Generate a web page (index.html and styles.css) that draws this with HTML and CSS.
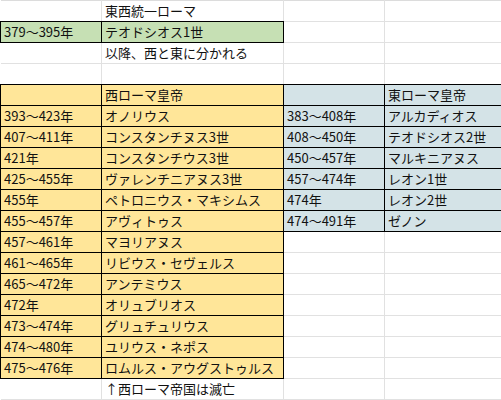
FILE: index.html
```html
<!DOCTYPE html>
<html lang="ja">
<head>
<meta charset="utf-8">
<link rel="stylesheet" href="styles.css">
</head>
<body class="page">
<table class="sheet">
  <colgroup>
    <col class="c-a"><col class="c-b"><col class="c-c"><col class="c-d">
  </colgroup>
  <tbody>
    <tr class="r"><td></td><td>東西統一ローマ</td><td></td><td></td></tr>
    <tr class="r"><td class="g">379～395年</td><td class="g">テオドシオス1世</td><td></td><td></td></tr>
    <tr class="r"><td></td><td>以降、西と東に分かれる</td><td></td><td></td></tr>
    <tr class="r"><td></td><td></td><td></td><td></td></tr>
    <tr class="r"><td class="y"></td><td class="y">西ローマ皇帝</td><td class="bl"></td><td class="bl">東ローマ皇帝</td></tr>
    <tr class="r"><td class="y">393～423年</td><td class="y">オノリウス</td><td class="bl">383～408年</td><td class="bl">アルカディオス</td></tr>
    <tr class="r"><td class="y">407～411年</td><td class="y">コンスタンチヌス3世</td><td class="bl">408～450年</td><td class="bl">テオドシオス2世</td></tr>
    <tr class="r"><td class="y">421年</td><td class="y">コンスタンチウス3世</td><td class="bl">450～457年</td><td class="bl">マルキニアヌス</td></tr>
    <tr class="r"><td class="y">425～455年</td><td class="y">ヴァレンチニアヌス3世</td><td class="bl">457～474年</td><td class="bl">レオン1世</td></tr>
    <tr class="r"><td class="y">455年</td><td class="y">ペトロニウス・マキシムス</td><td class="bl">474年</td><td class="bl">レオン2世</td></tr>
    <tr class="r"><td class="y">455～457年</td><td class="y">アヴィトゥス</td><td class="bl">474～491年</td><td class="bl">ゼノン</td></tr>
    <tr class="r"><td class="y">457～461年</td><td class="y">マヨリアヌス</td><td></td><td></td></tr>
    <tr class="r"><td class="y">461～465年</td><td class="y">リビウス・セヴェルス</td><td></td><td></td></tr>
    <tr class="r"><td class="y">465～472年</td><td class="y">アンテミウス</td><td></td><td></td></tr>
    <tr class="r"><td class="y">472年</td><td class="y">オリュブリオス</td><td></td><td></td></tr>
    <tr class="r"><td class="y">473～474年</td><td class="y">グリュチュリウス</td><td></td><td></td></tr>
    <tr class="r"><td class="y">474～480年</td><td class="y">ユリウス・ネポス</td><td></td><td></td></tr>
    <tr class="r"><td class="y">475～476年</td><td class="y">ロムルス・アウグストゥルス</td><td></td><td></td></tr>
    <tr class="r"><td></td><td>↑西ローマ帝国は滅亡</td><td></td><td></td></tr>
  </tbody>
</table>
</body>
</html>
```

FILE: styles.css
```css
html, body {
  margin: 0;
  padding: 0;
  background: #ffffff;
}
.page {
  font-family: "Noto Sans CJK JP", "Noto Sans", sans-serif;
  font-size: 13px;
  color: #111111;
  overflow: hidden;
}
.sheet {
  border-collapse: collapse;
  table-layout: fixed;
  width: 514px;
  border-top: 1px solid #dcdcdc;
}
.c-a { width: 101px; border-right: 1px solid #e1e1e1; }
.c-b { width: 182px; border-right: 1px solid #e1e1e1; }
.c-c { width: 101px; border-right: 1px solid #e1e1e1; }
.c-d { width: 130px; }
.r {
  height: 21px;
  border-bottom: 1px solid #e1e1e1;
}
.sheet td {
  padding: 0 3px;
  white-space: nowrap;
  overflow: visible;
  line-height: 20px;
  vertical-align: middle;
  border: none;
}
.sheet td.g {
  background: #c6e0b4;
  border: 1px solid #000000;
}
.sheet td.y {
  background: #ffe699;
  border: 1px solid #000000;
}
.sheet td.bl {
  background: #d4e3e7;
  border: 1px solid #000000;
}
```
